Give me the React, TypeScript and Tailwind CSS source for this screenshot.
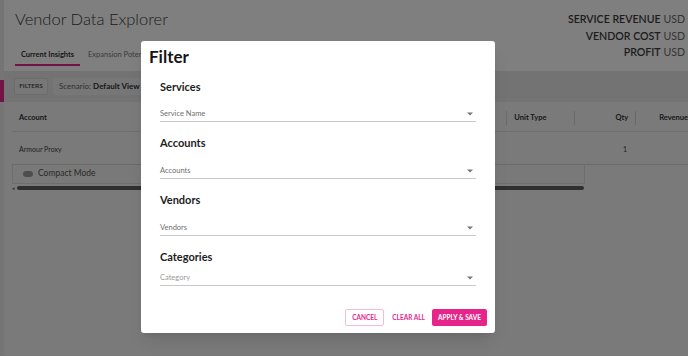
import React from "react";

const pink = "#e6258a";

function Caret() {
  return (
    <svg width="6" height="4" viewBox="0 0 6 4" className="shrink-0">
      <path d="M0 0.5 L6 0.5 L3 3.5 Z" fill="#777" />
    </svg>
  );
}

function FilterSection({
  title,
  placeholder,
  gap,
  light,
}: {
  title: string;
  placeholder: string;
  gap: string;
  light?: boolean;
}) {
  return (
    <div className="flex flex-col">
      <div className="h-[14px] text-[11px] leading-[14px] font-bold text-[#1d1d1d]">{title}</div>
      <div className={`${gap} flex h-[16px] items-center justify-between border-b border-[#c9c9c9] pr-[3px]`}>
        <span className={`text-[7.5px] ${light ? "text-[#9a9a9a]" : "text-[#6f6f6f]"}`}>{placeholder}</span>
        <Caret />
      </div>
    </div>
  );
}

export default function App() {
  return (
    <div
      className="relative h-[356px] w-full overflow-hidden bg-[#f3f5f3]"
      style={{ fontFamily: "Lato, 'Open Sans', sans-serif" }}
    >
      {/* page underneath the overlay */}
      <div className="flex h-full flex-col border-l-[4px] border-[#e9ebe9]">
        <div className="bg-white pb-[5px]">
          <div className="flex justify-between pl-[11px] pr-[3px]">
            <h1 className="pt-[9px] text-[16.5px] font-light leading-[20px] text-[#3a3a3a]">Vendor Data Explorer</h1>
            <div className="flex flex-col items-end pt-[11px] text-[10.6px] leading-[16.5px] text-[#3a3a3a]">
              <div>
                <span className="font-semibold">SERVICE REVENUE</span> <span className="text-[#6a6a6a]">USD</span>
              </div>
              <div>
                <span className="font-semibold">VENDOR COST</span> <span className="text-[#6a6a6a]">USD</span>
              </div>
              <div>
                <span className="font-semibold">PROFIT</span> <span className="text-[#6a6a6a]">USD</span>
              </div>
            </div>
          </div>
          <div className="-mt-[15px] flex gap-[8px] pl-[11px] text-[7.5px]">
            <div className="flex h-[20px] w-[65px] items-center justify-center border-b-2 border-[#e6258a] font-bold text-[#333]">
              Current Insights
            </div>
            <div className="flex h-[20px] items-center pb-[2px] text-[#777]">Expansion Potential</div>
          </div>
        </div>
        <div className="flex h-[31px] items-center gap-[5px] bg-[#e4e6e4] pl-[10px]">
          <div className="flex h-[17px] w-[34px] items-center justify-center rounded-[2px] border border-[#d8d8d8] bg-[#eceeec] text-[6.5px] font-semibold text-[#444]">
            FILTERS
          </div>
          <div className="flex h-[17px] w-[300px] items-center rounded-[2px] bg-[#eceeec] pl-[6px] text-[8px] text-[#666]">
            Scenario: <span className="ml-[2px] font-bold text-[#333]">Default View (All)</span>
          </div>
        </div>
        <div className="ml-[8px] mt-[1px] flex flex-col">
          <div className="flex h-[29px] items-center border-b border-[#dcdcdc] pt-[3px] text-[7.5px] font-bold text-[#333]">
            <div className="w-[495px] pl-[7px]">Account</div>
            <div className="flex h-[14px] w-[68px] items-center border-l border-[#d5d5d5] pl-[7px]">Unit Type</div>
            <div className="flex h-[14px] w-[61px] items-center justify-end border-l border-[#d5d5d5] pr-[7px]">Qty</div>
            <div className="flex h-[14px] items-center border-l border-[#d5d5d5] pl-[23px]">Revenue</div>
          </div>
          <div className="flex h-[33px] items-center border-b border-[#d5d5d5] pt-[4px] text-[7px] text-[#444]">
            <div className="w-[611px] pl-[7px]">Armour Proxy</div>
            <div>1</div>
          </div>
          <div className="flex h-[19px] w-[573px] items-center gap-[5px] border border-t-0 border-[#dcdcdc] bg-[#f0f2f0] pl-[10px] text-[8.5px] text-[#555]">
            <div className="h-[6px] w-[10px] rounded-full bg-[#9b9b9b]" />
            Compact Mode
          </div>
          <div className="mt-[2px] flex h-[5px] w-[573px] items-center gap-[2px]">
            <div className="text-[5px] leading-none text-[#666]">◂</div>
            <div className="h-[4px] w-[567px] rounded-full bg-[#5f5f5f]" />
          </div>
        </div>
      </div>
      <div className="absolute left-0 top-[80px] h-[22px] w-[4px] bg-[#e6258a]" />

      {/* overlay */}
      <div className="absolute inset-0 bg-black/50" />

      {/* dialog */}
      <div className="absolute left-[141px] top-[41px] flex h-[292px] w-[354px] flex-col rounded-[3px] bg-white shadow-lg">
        <div className="pl-[8px] pt-[6px] text-[17px] font-bold leading-[20px] text-[#151515]">Filter</div>
        <div className="mt-[13px] flex flex-col gap-[14px] px-[19px]">
          <FilterSection title="Services" placeholder="Service Name" gap="mt-[12px]" />
          <FilterSection title="Accounts" placeholder="Accounts" gap="mt-[13px]" />
          <FilterSection title="Vendors" placeholder="Vendors" gap="mt-[13px]" />
          <FilterSection title="Categories" placeholder="Category" gap="mt-[6px]" light />
        </div>
        <div className="mt-auto flex items-center justify-end whitespace-nowrap pb-[7px] pr-[8px] text-[6.5px] font-bold">
          <button
            className="flex h-[17px] w-[39px] items-center justify-center rounded-[2px] border border-[#f3bcd8]"
            style={{ color: pink }}
          >
            CANCEL
          </button>
          <button className="ml-[8px] flex h-[17px] items-center justify-center text-[#e6258a]">CLEAR ALL</button>
          <button className="ml-[7px] flex h-[17px] w-[55px] items-center justify-center rounded-[2px] bg-[#e6258a] text-white">
            APPLY &amp; SAVE
          </button>
        </div>
      </div>
    </div>
  );
}
